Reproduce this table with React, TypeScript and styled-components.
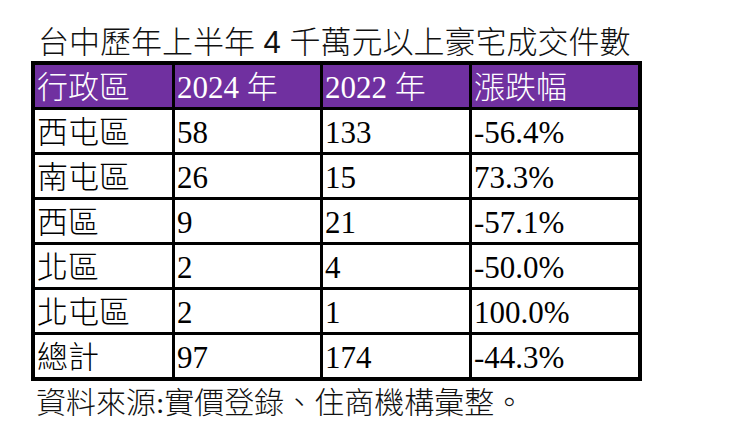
import { Fragment, ReactElement } from "react";
import styled, { createGlobalStyle } from "styled-components";

type Row = {
  district: string;
  y2024: string;
  y2022: string;
  change: string;
};

const rows: Row[] = [
  { district: "西屯區", y2024: "58", y2022: "133", change: "-56.4%" },
  { district: "南屯區", y2024: "26", y2022: "15", change: "73.3%" },
  { district: "西區", y2024: "9", y2022: "21", change: "-57.1%" },
  { district: "北區", y2024: "2", y2022: "4", change: "-50.0%" },
  { district: "北屯區", y2024: "2", y2022: "1", change: "100.0%" },
  { district: "總計", y2024: "97", y2022: "174", change: "-44.3%" },
];

const headers = ["行政區", "2024 年", "2022 年", "漲跌幅"];

const GlobalStyle = createGlobalStyle`
  html, body {
    margin: 0;
    padding: 0;
    background: #ffffff;
  }
`;

const Page = styled.div`
  width: 750px;
  height: 440px;
  padding: 27px 0 0 31px;
  box-sizing: border-box;
  color: #111;
`;

const Title = styled.h1`
  margin: 0 0 3px 7px;
  font-family: "Liberation Sans", "Noto Sans CJK TC", sans-serif;
  font-weight: 300;
  font-size: 31px;
  line-height: 31px;
  white-space: nowrap;
`;

// black background + gaps draw the grid lines
const Table = styled.div`
  display: grid;
  grid-template-columns: 137px 145px 146px 166px;
  grid-auto-rows: 42px;
  gap: 3px;
  width: max-content;
  background: #000;
  border: 4px solid #000;
`;

const Cell = styled.div<{ $head?: boolean }>`
  display: flex;
  align-items: center;
  padding: 3px 0 0 2px;
  box-sizing: border-box;
  background: ${(p) => (p.$head ? "#7030a0" : "#ffffff")};
  color: ${(p) => (p.$head ? "#ffffff" : "#000000")};
  font-family: "Liberation Serif", "Noto Sans CJK TC", serif;
  font-weight: 300;
  font-size: 31px;
  line-height: 31px;
  white-space: nowrap;
`;

const Source = styled.p`
  margin: 7px 0 0 5px;
  font-family: "Liberation Serif", "Noto Sans CJK TC", serif;
  font-weight: 300;
  font-size: 30px;
  line-height: 30px;
  white-space: nowrap;
`;

export default function App(): ReactElement {
  return (
    <>
      <GlobalStyle />
      <Page>
        <Title>台中歷年上半年 4 千萬元以上豪宅成交件數</Title>
        <Table>
          {headers.map((h) => (
            <Cell key={h} $head>
              {h}
            </Cell>
          ))}
          {rows.map((r) => (
            <Fragment key={r.district}>
              <Cell>{r.district}</Cell>
              <Cell>{r.y2024}</Cell>
              <Cell>{r.y2022}</Cell>
              <Cell>{r.change}</Cell>
            </Fragment>
          ))}
        </Table>
        <Source>資料來源:實價登錄、住商機構彙整。</Source>
      </Page>
    </>
  );
}
